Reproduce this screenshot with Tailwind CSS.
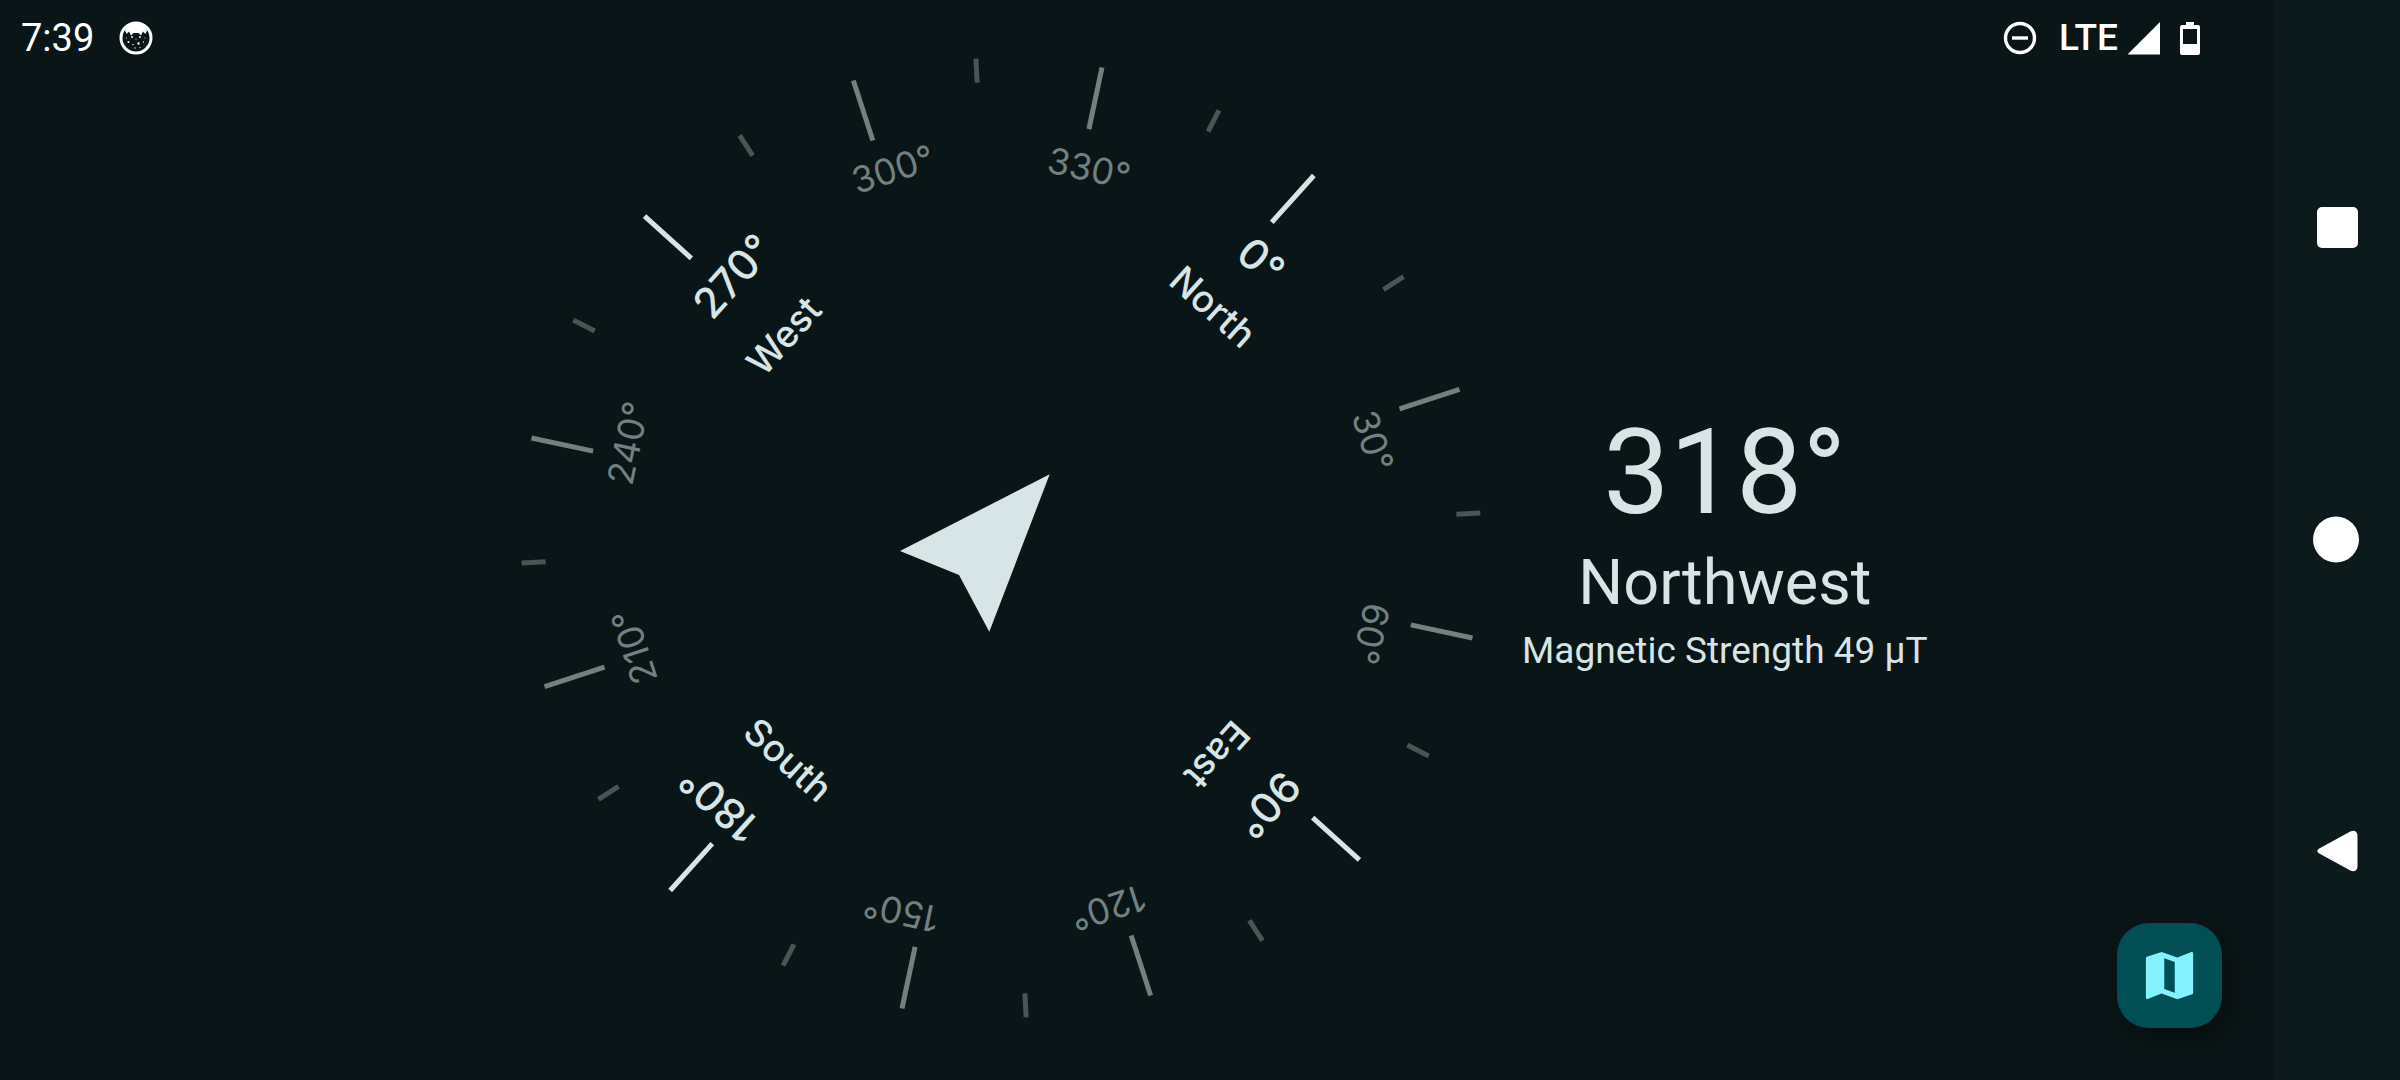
<!DOCTYPE html>
<html lang="en">
<head>
<meta charset="utf-8">
<meta name="viewport" content="width=device-width, initial-scale=1">
<title>Compass</title>
<script src="https://cdn.jsdelivr.net/npm/@tailwindcss/browser@4"></script>
</head>
<body class="flex min-h-screen bg-[#0a1517] font-[Roboto,sans-serif] text-[#d8e5e6]">
<div class="relative flex min-w-0 flex-1 flex-col">
  <!-- Status bar -->
  <header class="flex h-14 items-end justify-between pr-[72px] pl-[21px] text-white">
    <div class="flex items-center gap-6">
      <time class="text-[38px] leading-9">7:39</time>
      <svg class="size-9" viewBox="0 0 36 36" aria-label="Notification">
        <circle cx="18" cy="18" r="15" fill="none" stroke="#fff" stroke-width="3"/>
        <path d="M7 10.500 Q10 4 18 3 Q26 4 29 10.500 L27.500 14 L25 11.500 L23 15.500 L20.500 13 H15.500 L13 15.500 L11 11.500 L8.500 14Z" fill="#fff"/>
        <g fill="#fff"><circle cx="10.500" cy="22" r="1"/><circle cx="14" cy="17" r=".9"/><circle cx="22" cy="17" r=".9"/><circle cx="20.500" cy="23.500" r="1.200"/><circle cx="15" cy="24.500" r=".7"/><circle cx="25.500" cy="22" r=".7"/><circle cx="18" cy="19" r=".5"/><circle cx="17" cy="28" r=".7"/><circle cx="22" cy="27.500" r=".6"/><circle cx="8.500" cy="18" r=".5"/><circle cx="27" cy="18" r=".5"/></g>
      </svg>
    </div>
    <div class="flex items-center">
      <svg class="mr-[21px] size-9" viewBox="0 0 36 36" aria-label="Do not disturb">
        <circle cx="18" cy="18" r="14.500" fill="none" stroke="#fff" stroke-width="3.400"/>
        <path d="M10 18H26" stroke="#fff" stroke-width="3.400"/>
      </svg>
      <span class="mr-2 text-[37px] leading-9 font-medium">LTE</span>
      <svg class="mr-4 size-9" viewBox="0 0 36 36" aria-label="Signal"><path d="M1.500 34.500L34 2V34.500Z" fill="#fff"/></svg>
      <svg class="h-9 w-6" viewBox="0 0 24 36" aria-label="Battery">
        <path fill-rule="evenodd" fill="#fff" d="M8 2H16V5H20Q22 5 22 7V33Q22 35 20 35H4Q2 35 2 33V7Q2 5 4 5H8ZM5 9V24H19V9Z"/>
      </svg>
    </div>
  </header>

  <main class="flex flex-1 items-center gap-[38px] pb-[60px] pl-[22.87%]">
    <svg id="dial" class="w-[964px] shrink-0" viewBox="520 56 964 964" role="img" aria-label="Compass dial">
      <g id="ticks"></g>
      <path d="M1049.700 474.300L989.300 631.700L959 575L900 551Z" fill="#d8e5e6"/>
      <g id="labels" class="font-[Inter,sans-serif]" text-anchor="middle"></g>
    </svg>
    <section class="flex flex-col items-center pt-[14px] whitespace-nowrap">
      <h1 class="mb-2 text-[118px] leading-[120px]">318°</h1>
      <p class="text-[63px] leading-[84px]">Northwest</p>
      <p class="text-[37px] leading-[52px]">Magnetic Strength 49 µT</p>
    </section>
  </main>

  <button type="button" aria-label="Open map" class="absolute right-[52px] bottom-[52px] flex size-[105px] items-center justify-center rounded-[32px] bg-[#004f54] shadow-[8px_10px_22px_rgba(0,0,0,0.35)]">
    <svg class="size-[63px]" viewBox="0 0 24 24"><path fill="#82f3ff" d="M20.500 3l-.160.030L15 5.100 9 3 3.360 4.900c-.210.070-.360.250-.360.480V20.500c0 .280.220.500.500.500l.160-.030L9 18.900l6 2.100 5.640-1.900c.210-.070.360-.250.360-.480V3.500c0-.280-.220-.500-.500-.500zM10 5.470l4 1.400v11.660l-4-1.400V5.470z"/></svg>
  </button>
</div>

<nav class="flex w-[126px] shrink-0 flex-col items-center justify-center gap-[264px] bg-[#0c1a1b]" aria-label="System navigation">
  <button type="button" aria-label="Overview"><svg class="size-12" viewBox="0 0 48 48"><rect x="4" y="3" width="41" height="41" rx="5" fill="#fff"/></svg></button>
  <button type="button" aria-label="Home"><svg class="size-12" viewBox="0 0 48 48"><circle cx="23" cy="23.500" r="23" fill="#fff"/></svg></button>
  <button type="button" aria-label="Back"><svg class="size-12" viewBox="0 0 48 48"><path d="M7 23L39 5.500Q42 4.500 42 7.500V38.500Q42 41.500 39 40.500Z" fill="#fff" stroke="#fff" stroke-width="5" stroke-linejoin="round"/></svg></button>
</nav>

<script>
  const NS = 'http://www.w3.org/2000/svg';
  const make = (parent, name, attrs, text) => {
    const el = document.createElementNS(NS, name);
    for (const k in attrs) el.setAttribute(k, attrs[k]);
    if (text) el.textContent = text;
    document.getElementById(parent).append(el);
  };
  // The north-south axis sits slightly apart from the rest of the dial.
  const heading = 318, turn = 360 - heading;
  for (let a = 0; a < 360; a += 15) {
    const axis = a % 180 === 0;
    const main = a % 90 === 0, minor = a % 30 !== 0;
    const cx = axis ? 992 : minor ? 1001 : 1002, cy = axis ? 533 : 538;
    make('ticks', 'line', {
      x1: cx, x2: cx, y1: cy - (minor ? 480 : 481), y2: cy - (minor ? 456 : 418),
      stroke: main ? '#d8e5e6' : minor ? '#485556' : '#728080',
      'stroke-width': 5, transform: `rotate(${turn} ${cx} ${cy}) rotate(${a} ${cx} ${cy})`
    });
  }
  const labels = [
    ['0°', 0, 1261, 261], ['30°', 30, 1373, 441], ['60°', 60, 1371, 634],
    ['90°', 90, 1268, 805], ['120°', 120, 1108, 908], ['150°', 150, 901, 912],
    ['180°', 180, 719, 804], ['210°', 210, 634, 647], ['240°', 240, 628, 443],
    ['270°', 270, 733, 276], ['300°', 300, 893, 169], ['330°', 330, 1089, 168]
  ];
  for (const [t, a, x, y] of labels) {
    const main = a % 90 === 0, size = main ? 42 : 36;
    make('labels', 'text', {
      x, y: y + Math.round(size * 0.36), 'font-size': size, 'font-weight': main ? 500 : 400,
      fill: main ? '#d8e5e6' : '#728080', transform: `rotate(${a + turn} ${x} ${y})`
    }, t);
  }
  for (const [t, r, x, y] of [['North', 42, 1213, 307], ['East', 132, 1217, 755], ['South', 42, 788, 760], ['West', -48, 784, 336]])
    make('labels', 'text', { x, y: y + 13, 'font-size': 37, 'font-weight': 500, fill: '#d8e5e6', transform: `rotate(${r} ${x} ${y})` }, t);
</script>
</body>
</html>
